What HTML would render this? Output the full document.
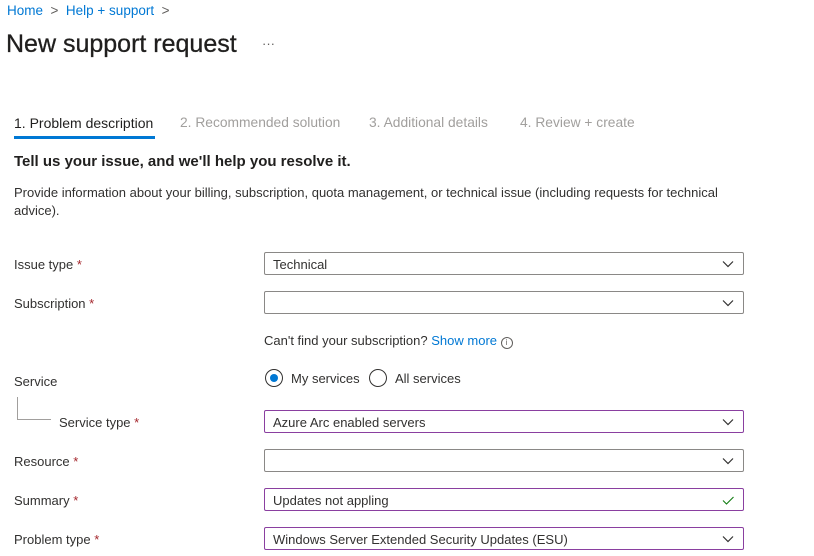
<!DOCTYPE html>
<html><head><style>
body{margin:0;width:814px;height:556px;background:#fff;font-family:"Liberation Sans",sans-serif;color:#323130;position:relative;overflow:hidden}
.a{position:absolute;white-space:nowrap}
.bc{color:#0078d4;font-size:13.5px}
.lbl{font-size:13px;color:#323130}
.req{color:#a4262c}
.box{position:absolute;left:264px;width:470px;height:21px;border:1px solid #8a8886;border-radius:2px;font-size:13px;line-height:23px;padding-left:8px;box-sizing:content-box}
.box.p{border-color:#8a3fa0}
.chev{position:absolute;right:8px;top:4px}
</style></head><body>
<div class="a bc" style="left:7px;top:3px">Home <span style="color:#605e5c">&nbsp;&gt;&nbsp;</span> Help + support <span style="color:#605e5c">&nbsp;&gt;</span></div>
<div class="a" style="left:6px;top:30px;font-size:25px;color:#201f1e;-webkit-text-stroke:0.3px #201f1e">New support request</div>
<div class="a" style="left:262px;top:36px;font-size:13px;color:#605e5c">···</div>
<div class="a" style="left:14px;top:115px;font-size:14px;color:#201f1e">1. Problem description</div>
<div class="a" style="left:14px;top:136px;width:141px;height:3px;background:#0078d4"></div>
<div class="a" style="left:180px;top:115px;font-size:13.8px;color:#a19f9d">2. Recommended solution</div>
<div class="a" style="left:369px;top:115px;font-size:13.8px;color:#a19f9d">3. Additional details</div>
<div class="a" style="left:520px;top:115px;font-size:13.8px;color:#a19f9d">4. Review + create</div>
<div class="a" style="left:14px;top:153px;font-size:15px;font-weight:bold;color:#201f1e">Tell us your issue, and we'll help you resolve it.</div>
<div class="a" style="left:14px;top:184px;font-size:13px;line-height:18px;white-space:normal;width:720px">Provide information about your billing, subscription, quota management, or technical issue (including requests for technical advice).</div>

<div class="a lbl" style="left:14px;top:257px">Issue type <span class="req">*</span></div>
<div class="box" style="top:252px">Technical<svg class="chev" width="14" height="14" viewBox="0 0 14 14"><path d="M2 4.5l5 5 5-5" fill="none" stroke="#323130" stroke-width="1.2"/></svg></div>
<div class="a lbl" style="left:14px;top:296px">Subscription <span class="req">*</span></div>
<div class="box" style="top:291px"><svg class="chev" width="14" height="14" viewBox="0 0 14 14"><path d="M2 4.5l5 5 5-5" fill="none" stroke="#323130" stroke-width="1.2"/></svg></div>
<div class="a" style="left:264px;top:333px;font-size:13px">Can't find your subscription? <span style="color:#0078d4">Show more</span> <span style="display:inline-block;width:10px;height:10px;border:1px solid #605e5c;border-radius:50%;font-size:8px;line-height:10px;text-align:center;color:#605e5c;vertical-align:0px">i</span></div>

<div class="a lbl" style="left:14px;top:374px">Service</div>
<div class="a" style="left:17px;top:397px;width:33px;height:22px;border-left:1px solid #a19f9d;border-bottom:1px solid #a19f9d"></div>
<div class="a" style="left:265px;top:369px;width:16px;height:16px;border:1px solid #323130;border-radius:50%"><div style="position:absolute;left:4px;top:4px;width:8px;height:8px;border-radius:50%;background:#0078d4"></div></div>
<div class="a lbl" style="left:291px;top:371px">My services</div>
<div class="a" style="left:369px;top:369px;width:16px;height:16px;border:1px solid #323130;border-radius:50%"></div>
<div class="a lbl" style="left:395px;top:371px">All services</div>

<div class="a lbl" style="left:59px;top:415px">Service type <span class="req">*</span></div>
<div class="box p" style="top:410px">Azure Arc enabled servers<svg class="chev" width="14" height="14" viewBox="0 0 14 14"><path d="M2 4.5l5 5 5-5" fill="none" stroke="#323130" stroke-width="1.2"/></svg></div>
<div class="a lbl" style="left:14px;top:454px">Resource <span class="req">*</span></div>
<div class="box" style="top:449px"><svg class="chev" width="14" height="14" viewBox="0 0 14 14"><path d="M2 4.5l5 5 5-5" fill="none" stroke="#323130" stroke-width="1.2"/></svg></div>
<div class="a lbl" style="left:14px;top:493px">Summary <span class="req">*</span></div>
<div class="box p" style="top:488px">Updates not appling<svg class="chev" width="14" height="14" viewBox="0 0 14 14"><path d="M2 7.5l3.5 3.5 7-7" fill="none" stroke="#107c10" stroke-width="1.1"/></svg></div>
<div class="a lbl" style="left:14px;top:532px">Problem type <span class="req">*</span></div>
<div class="box p" style="top:527px">Windows Server Extended Security Updates (ESU)<svg class="chev" width="14" height="14" viewBox="0 0 14 14"><path d="M2 4.5l5 5 5-5" fill="none" stroke="#323130" stroke-width="1.2"/></svg></div>
</body></html>
